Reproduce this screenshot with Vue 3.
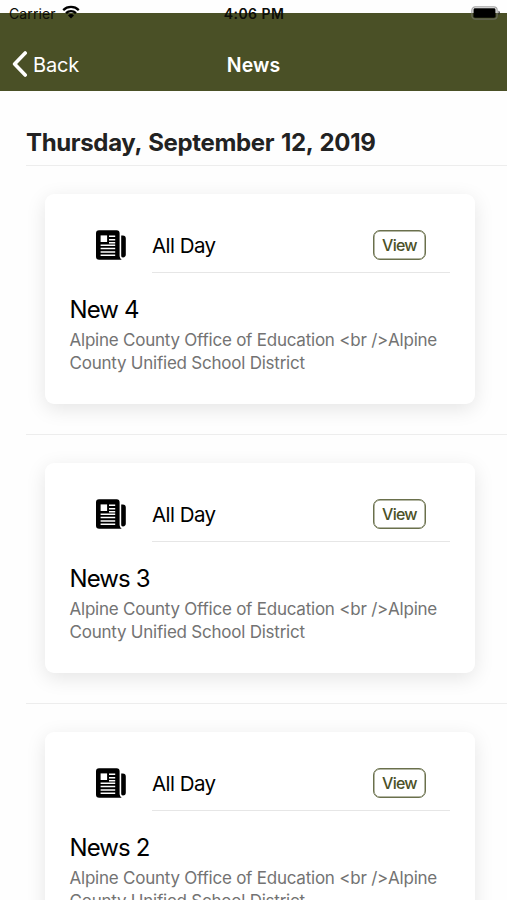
<template>
  <div class="screen">
    <!-- Status Bar -->
    <div class="status-bar">
      <div class="status-left">
        <span class="carrier">Carrier</span>
        <svg class="wifi" viewBox="0 0 18 14" width="18" height="14">
          <path d="M1.2 5.1a11.2 11.2 0 0 1 15.6 0" />
          <path d="M4 8.2a7.2 7.2 0 0 1 10 0" />
          <path class="dot" d="M9 13.4 6 10.5a4.3 4.3 0 0 1 6 0z" />
        </svg>
      </div>
      <span class="time">4:06 PM</span>
      <svg class="battery" viewBox="0 0 30 14" width="30" height="14">
        <rect x="0.9" y="0.9" width="25.2" height="12.2" rx="3.4" class="shell" />
        <rect x="2.5" y="2.3" width="22" height="9.4" rx="1.4" />
        <path d="M27.500 4.800c1.800.6 1.800 3.800 0 4.400z" class="cap" />
      </svg>
    </div>

    <!-- Navigation -->
    <header class="toolbar">
      <button class="back">
        <svg viewBox="0 0 16 26" width="16" height="26">
          <path d="M13.2 2 2.6 13l10.6 11" />
        </svg>
        <span>Back</span>
      </button>
      <h1>News</h1>
    </header>

    <main class="content">
      <h2 class="date">Thursday, September 12, 2019</h2>

      <div v-for="item in news" :key="item.id" class="news-item">
        <div class="card">
          <div class="card-head">
            <svg class="news-icon" viewBox="0 0 30 30" width="30" height="30">
              <path d="M3 .2h17.600a3 3 0 0 1 3 3V25.500c0 2 .8 3.300 2.200 4.300H3.200a3.200 3.200 0 0 1-3.200-3.200V3.200a3 3 0 0 1 3-3z" />
              <path d="M25.200 5.400h1.600a3 3 0 0 1 3 3v16a2.900 2.900 0 0 1-2.900 3c-1.200 0-1.700-.8-1.700-2z" />
              <path class="paper" d="M4.600 5.400h6.500v6.600H4.600z" />
              <path class="lines" d="M13 6.300h6.200M13 9.700h6.200M13 12.800h6.200M4.600 15.200h14.600M4.600 18.600h14.600M4.600 22h14.600M4.600 25.300h14.600" />
            </svg>
            <div class="card-row">
              <span class="when">{{ item.time }}</span>
              <button class="view">View</button>
            </div>
          </div>
          <h3>{{ item.title }}</h3>
          <p>{{ item.location }}</p>
        </div>
      </div>
    </main>
  </div>
</template>

<script setup>
import { ref } from 'vue';

const location = 'Alpine County Office of Education <br />Alpine County Unified School District';

const news = ref([
  { id: 4, time: 'All Day', title: 'New 4', location },
  { id: 3, time: 'All Day', title: 'News 3', location },
  { id: 2, time: 'All Day', title: 'News 2', location },
]);
</script>

<style>
body {
  margin: 0;
  background: #fefefe;
}
</style>

<style scoped>
.screen {
  position: relative;
  box-sizing: border-box;
  height: 900px;
  padding-top: 13px;
  overflow: hidden;
  background: #fefefe;
  font-family: Inter, "Liberation Sans", sans-serif;
  color: #000;
}

button {
  margin: 0;
  background: none;
  font-family: inherit;
  cursor: pointer;
}

/* floats over the top edge of the toolbar */
.status-bar {
  position: absolute;
  top: 4px;
  left: 0;
  right: 0;
  z-index: 2;
  display: grid;
  grid-template-columns: 1fr auto 1fr;
  align-items: center;
  height: 20px;
  padding: 0 6px 0 9px;
  color: #0c0d08;
}

.status-left {
  display: flex;
  align-items: center;
  gap: 6px;
}

.carrier {
  margin-top: -1px;
  font-size: 14px;
  letter-spacing: 0.1px;
}

.wifi {
  margin-top: -4px;
  fill: none;
  stroke: #000;
  stroke-width: 2.3;
}

.wifi .dot {
  fill: #000;
  stroke: none;
}

.time {
  margin: -1px 2px 0 0;
  font-size: 14px;
  font-weight: 600;
  letter-spacing: 0.45px;
}

.battery {
  justify-self: end;
  margin-top: -3px;
}

.battery .shell {
  fill: none;
  stroke: #777;
  stroke-opacity: 0.65;
  stroke-width: 1.3;
}

.battery .cap {
  fill: #333;
}

.toolbar {
  display: grid;
  grid-template-columns: 1fr auto 1fr;
  align-items: center;
  box-sizing: border-box;
  height: 78px;
  padding: 24px 12px 0;
  background: #4a5026;
  color: #fff;
}

.back {
  display: flex;
  align-items: center;
  gap: 5px;
  padding: 0;
  border: none;
  color: #fff;
  font-size: 20px;
  letter-spacing: -0.2px;
}

.back svg {
  fill: none;
  stroke: #fff;
  stroke-width: 3.6;
  stroke-linecap: round;
  stroke-linejoin: round;
}

.back span {
  padding-top: 1px;
}

h1 {
  margin: 0;
  padding: 1px 0 0;
  font-size: 19.5px;
  font-weight: 600;
  letter-spacing: 0.1px;
}

.date {
  box-sizing: border-box;
  height: 75px;
  margin: 0 0 0 26px;
  padding-top: 37px;
  border-bottom: 1px solid #ededed;
  color: #222;
  font-size: 24px;
  font-weight: 700;
  letter-spacing: -0.35px;
  word-spacing: 1.5px;
  line-height: 30px;
  white-space: nowrap;
}

.news-item {
  margin-left: 26px;
  padding: 28px 32px 30px 19px;
  border-bottom: 1px solid #ededed;
}

.card {
  box-sizing: border-box;
  height: 210px;
  padding: 24px 25px 0;
  border-radius: 9px;
  background: #fff;
  box-shadow: 0 5px 20px rgba(0, 0, 0, 0.1);
}

.card-head {
  display: flex;
  align-items: flex-start;
  padding-left: 26px;
}

.news-icon {
  flex: none;
  margin: 12px 26px 0 0;
}

.news-icon .paper {
  fill: #fff;
}

.news-icon .lines {
  fill: none;
  stroke: #fff;
  stroke-width: 1.5;
}

.card-row {
  flex: 1;
  display: flex;
  align-items: center;
  justify-content: space-between;
  box-sizing: border-box;
  height: 55px;
  padding-right: 24px;
  border-bottom: 1px solid #e6e6e6;
}

.when {
  padding-top: 1px;
  font-size: 20.5px;
  letter-spacing: -0.55px;
}

.view {
  box-sizing: border-box;
  width: 53px;
  height: 30px;
  padding: 0;
  border: 1px solid #6a704c;
  border-radius: 7px;
  box-shadow: inset 0 0 0 0.5px #6a704c;
  color: #4b5127;
  font-size: 16px;
  font-weight: 500;
  letter-spacing: -0.75px;
}

h3 {
  margin: 22px 0 0 -0.5px;
  font-size: 24px;
  font-weight: 400;
  letter-spacing: -0.9px;
  line-height: 30px;
}

p {
  margin: 4px 0 0 -0.5px;
  color: #737373;
  font-size: 17px;
  letter-spacing: -0.23px;
  line-height: 23.3px;
}
</style>
